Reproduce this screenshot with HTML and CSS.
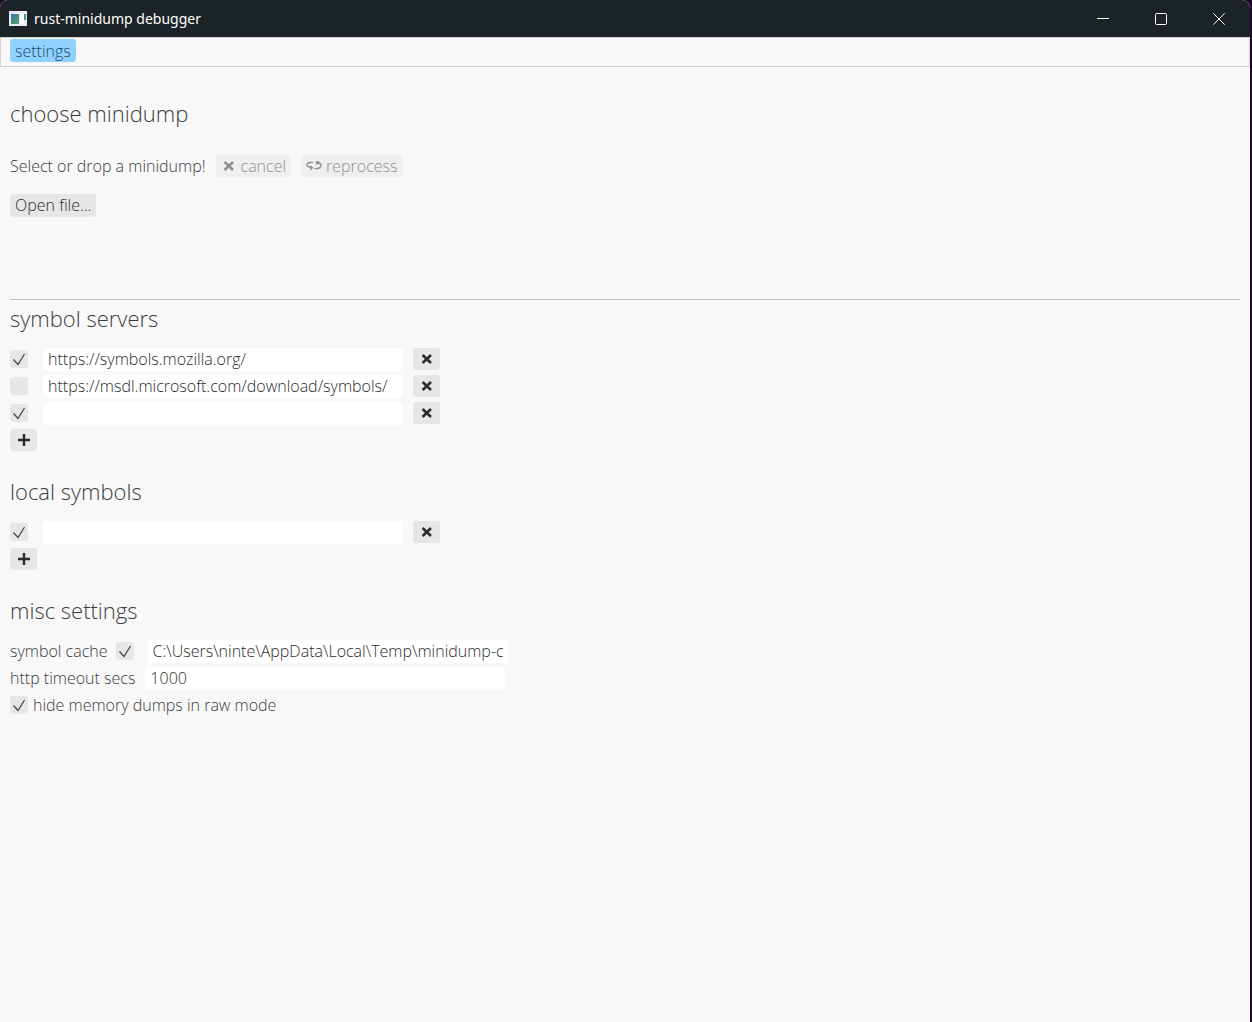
FILE: index.html
```html
<!DOCTYPE html>
<html lang="en">
<head>
    <meta charset="UTF-8">
    <meta name="viewport" content="width=device-width, initial-scale=1.0">
    <title>rust-minidump debugger</title>
    <link rel="stylesheet" href="styles.css">
</head>
<body>
    <!-- shared icons -->
    <svg class="sprite" aria-hidden="true">
        <symbol id="icon-x" viewBox="0 0 12 12">
            <path d="M1.6 2 10 10M10 2 1.6 10" fill="none" stroke="currentColor" stroke-width="2.6"/>
        </symbol>
        <symbol id="icon-plus" viewBox="0 0 12 12">
            <path d="M6 0V12M0 6H12" fill="none" stroke="currentColor" stroke-width="2.4"/>
        </symbol>
        <symbol id="icon-loop" viewBox="0 0 16 12">
            <path d="M7.2 2.6C4 2 1 2.8 1 4.8 1 6.6 2.8 7.2 5 7.4M8.4 8.6C12.4 8.8 15 7.8 15 5.6 15 4 14 3.2 12.4 2.8" fill="none" stroke="currentColor" stroke-width="1.4"/>
            <path d="M4.2 5.2 7.6 7.8 4.2 10.4ZM9.4 1.4 13 1 12.8 4.6 10 4.4Z" fill="currentColor"/>
        </symbol>
    </svg>

    <div class="window">
        <header class="titlebar">
            <svg class="app-icon" width="18" height="15" viewBox="0 0 18 15" aria-hidden="true">
                <defs>
                    <linearGradient id="screen" x1="0" y1="0" x2="1" y2="1">
                        <stop offset="0" stop-color="#3d6f9e"/>
                        <stop offset="1" stop-color="#57a777"/>
                    </linearGradient>
                </defs>
                <rect width="18" height="15" fill="#e9ecec"/>
                <rect x="2" y="3" width="8" height="10" fill="url(#screen)"/>
                <rect x="11" y="3" width="4" height="10" fill="#fff"/>
                <rect x="15" y="3" width="2" height="6" fill="#4c9682"/>
            </svg>
            <span class="title">rust-minidump debugger</span>
            <div class="window-buttons">
                <button type="button" aria-label="Minimize">
                    <svg width="12" height="12" viewBox="0 0 12 12"><path d="M0 5.5H12"/></svg>
                </button>
                <button type="button" aria-label="Maximize">
                    <svg width="12" height="12" viewBox="0 0 12 12"><rect x=".5" y=".5" width="11" height="11" rx="1"/></svg>
                </button>
                <button type="button" aria-label="Close">
                    <svg width="12" height="12" viewBox="0 0 12 12"><path d="M.3 .3 11.7 11.7M11.7 .3 .3 11.7"/></svg>
                </button>
            </div>
        </header>

        <nav class="menubar">
            <button type="button" class="tab active">settings</button>
        </nav>

        <main>
            <section class="minidump">
                <h1>choose minidump</h1>
                <div class="row status">
                    <span>Select or drop a minidump!</span>
                    <button type="button" class="btn" disabled><svg class="cancel-icon" width="12" height="12"><use href="#icon-x"/></svg>cancel</button>
                    <button type="button" class="btn" disabled><svg width="16" height="12"><use href="#icon-loop"/></svg>reprocess</button>
                </div>
                <button type="button" class="btn">Open file...</button>
            </section>

            <hr>

            <section>
                <h2>symbol servers</h2>
                <div class="rows">
                    <div class="row server">
                        <input type="checkbox" aria-label="Enable server 1" checked>
                        <input type="text" aria-label="Server 1" value="https://symbols.mozilla.org/">
                        <button type="button" class="btn icon" aria-label="Remove server 1"><svg width="12" height="12"><use href="#icon-x"/></svg></button>
                    </div>
                    <div class="row server">
                        <input type="checkbox" aria-label="Enable server 2">
                        <input type="text" aria-label="Server 2" value="https://msdl.microsoft.com/download/symbols/">
                        <button type="button" class="btn icon" aria-label="Remove server 2"><svg width="12" height="12"><use href="#icon-x"/></svg></button>
                    </div>
                    <div class="row server">
                        <input type="checkbox" aria-label="Enable server 3" checked>
                        <input type="text" aria-label="Server 3">
                        <button type="button" class="btn icon" aria-label="Remove server 3"><svg width="12" height="12"><use href="#icon-x"/></svg></button>
                    </div>
                    <button type="button" class="btn icon" aria-label="Add server"><svg width="12" height="12"><use href="#icon-plus"/></svg></button>
                </div>
            </section>

            <section>
                <h2>local symbols</h2>
                <div class="rows">
                    <div class="row server">
                        <input type="checkbox" aria-label="Enable path 1" checked>
                        <input type="text" aria-label="Path 1">
                        <button type="button" class="btn icon" aria-label="Remove path 1"><svg width="12" height="12"><use href="#icon-x"/></svg></button>
                    </div>
                    <button type="button" class="btn icon" aria-label="Add path"><svg width="12" height="12"><use href="#icon-plus"/></svg></button>
                </div>
            </section>

            <section>
                <h2>misc settings</h2>
                <div class="rows">
                    <div class="row cache">
                        <label for="cacheOn">symbol cache</label>
                        <input type="checkbox" id="cacheOn" checked>
                        <input type="text" aria-label="Symbol cache path" value="C:\Users\ninte\AppData\Local\Temp\minidump-cache">
                    </div>
                    <div class="row">
                        <label for="timeout">http timeout secs</label>
                        <input type="text" id="timeout" value="1000">
                    </div>
                    <div class="row raw">
                        <input type="checkbox" id="hideDumps" checked>
                        <label for="hideDumps">hide memory dumps in raw mode</label>
                    </div>
                </div>
            </section>
        </main>
    </div>
</body>
</html>
```

FILE: styles.css
```css
* {
    box-sizing: border-box;
}

body {
    margin: 0;
    background: #1d0a2b;
    color: #3c3c3c;
    font-family: "Open Sans", "Noto Sans", sans-serif;
    font-size: 16px;
    font-weight: 300;
    line-height: 22px;
}

button, input {
    font: inherit;
    color: inherit;
    margin: 0;
    border: none;
}

.sprite {
    display: none;
}

.window {
    display: flex;
    flex-direction: column;
    min-height: 100vh;
    margin-right: 2px;
    background: #f8f8f8;
    border-radius: 8px 8px 0 0;
    overflow: hidden;
}

/* title bar */
.titlebar {
    display: flex;
    align-items: center;
    height: 37px;
    padding: 0 2px 0 9px;
    background: #1c2326;
    color: #fff;
}

.title {
    margin-left: 7px;
    font-family: "Noto Sans", "Open Sans", sans-serif;
    font-size: 14px;
    font-weight: 400;
}

.window-buttons {
    display: flex;
    align-self: stretch;
    margin-left: auto;
}

.window-buttons button {
    display: flex;
    align-items: center;
    justify-content: center;
    width: 58px;
    padding: 0;
    background: none;
}

.window-buttons svg {
    fill: none;
    stroke: #fff;
}

/* menu */
.menubar {
    height: 30px;
    padding: 1px 9px;
    border: 1px solid #d0d0d0;
}

.tab {
    display: block;
    height: 23px;
    padding: 0 5px;
    border-radius: 3px;
    background: none;
}

.tab.active {
    background: #90d1ff;
    color: #1c4a68;
}

/* content */
main {
    padding: 31px 10px 10px;
}

h1, h2 {
    margin: 0;
    font-size: 22px;
    font-weight: 300;
    line-height: 30px;
}

h2 {
    margin-bottom: 15px;
}

section + section {
    margin-top: 25px;
}

hr {
    height: 1px;
    margin: 82px 0 3px;
    border: none;
    background: #bebebe;
}

.row {
    display: flex;
    align-items: flex-start;
    gap: 10px;
}

.rows {
    display: grid;
    justify-items: start;
    gap: 4px;
}

.status {
    margin: 27px 0 17px;
}

.btn {
    display: flex;
    align-items: center;
    gap: 4px;
    height: 23px;
    padding: 0 5px 1px;
    border-radius: 3px;
    background: #e6e6e6;
    color: #2c2c2c;
}

.status .btn {
    height: 22px;
}

.btn:disabled {
    background: #efefef;
    color: #909090;
}

.btn.icon {
    justify-content: center;
    width: 27px;
    height: 22px;
    padding: 0;
}

.cancel-icon {
    margin: 0 2px;
}

input[type="text"] {
    width: 360px;
    height: 23px;
    padding: 0 5px 1px;
    border-radius: 3px;
    background: #fff;
    color: #2c2c2c;
}

input[type="checkbox"] {
    appearance: none;
    width: 18px;
    height: 18px;
    margin-top: 2px;
    border-radius: 3px;
    background: #e6e6e6;
}

input[type="checkbox"]:checked {
    background: #e6e6e6 url("data:image/svg+xml,%3Csvg xmlns='http://www.w3.org/2000/svg' viewBox='0 0 18 18'%3E%3Cpath d='M3.5 9.5 8 14.5 14.5 4' fill='none' stroke='%23404040' stroke-width='1.2'/%3E%3C/svg%3E");
}

.server input[type="checkbox"] {
    margin-right: 5px;
}

.cache {
    gap: 8px;
}

.cache input[type="checkbox"] {
    margin-right: 6px;
}

.raw {
    gap: 5px;
}
```
